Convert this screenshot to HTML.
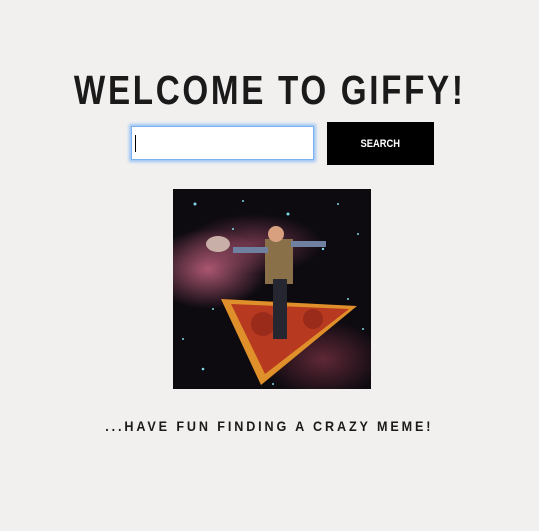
<!DOCTYPE html>
<html><head><style>
body{margin:0;width:539px;height:531px;background:#f2f0ef;font-family:"Liberation Sans",sans-serif;position:relative;overflow:hidden}
.t{position:absolute;left:0;width:539px;top:68px;text-align:center}
.t span{display:inline-block;font-weight:bold;font-size:41px;letter-spacing:3.3px;color:#1a1a1a;transform:scaleX(0.81);white-space:nowrap;line-height:44px}
.in{position:absolute;left:131px;top:126px;width:181px;height:32px;background:#fff;border:1px solid #7fb0f0;box-shadow:0 0 3px 2px #9cc4f5}
.in i{position:absolute;left:3px;top:8px;width:1px;height:17px;background:#000}
.btn{position:absolute;left:327px;top:122px;width:107px;height:43px;background:#000;color:#fff;font-weight:bold;font-size:11px;text-align:center;line-height:44px}
.btn span{display:inline-block;transform:scaleX(0.85)}
.img{position:absolute;left:173px;top:189px;width:198px;height:200px;overflow:hidden;background:
radial-gradient(ellipse 60px 40px at 35px 80px,rgba(200,100,130,.85),transparent),
radial-gradient(ellipse 70px 30px at 80px 55px,rgba(170,80,110,.6),transparent),
radial-gradient(ellipse 60px 40px at 150px 170px,rgba(150,60,80,.6),transparent),#0d0a10}
.bt{position:absolute;left:0;width:539px;top:418px;text-align:center}
.bt span{display:inline-block;font-weight:bold;font-size:14px;letter-spacing:3.2px;color:#1a1a1a;transform:scaleX(0.9);white-space:nowrap}
</style></head><body>
<div class="t"><span>WELCOME TO GIFFY!</span></div>
<div class="in"><i></i></div>
<div class="btn"><span>SEARCH</span></div>
<div class="img"><svg width="198" height="200">
<g fill="#7fd8e8"><circle cx="22" cy="15" r="1.5"/><circle cx="70" cy="12" r="1"/><circle cx="115" cy="25" r="1.5"/><circle cx="165" cy="15" r="1"/><circle cx="185" cy="45" r="1"/><circle cx="150" cy="60" r="1.2"/><circle cx="40" cy="120" r="1"/><circle cx="10" cy="150" r="1"/><circle cx="30" cy="180" r="1.3"/><circle cx="175" cy="110" r="1"/><circle cx="190" cy="140" r="1"/><circle cx="100" cy="195" r="1"/><circle cx="60" cy="40" r="1"/></g>
<polygon points="48,110 184,117 88,196" fill="#e0902a"/>
<polygon points="58,115 176,120 92,185" fill="#b73a20"/>
<circle cx="90" cy="135" r="12" fill="#9a2a1a"/><circle cx="140" cy="130" r="10" fill="#9a2a1a"/>
<rect x="92" y="50" width="28" height="45" fill="#8a7048"/>
<rect x="100" y="90" width="14" height="60" fill="#262630"/>
<circle cx="103" cy="45" r="8" fill="#d9a080"/>
<ellipse cx="45" cy="55" rx="12" ry="8" fill="#c8b0a8"/>
<rect x="60" y="58" width="35" height="6" fill="#7080a0"/><rect x="118" y="52" width="35" height="6" fill="#7080a0"/>
</svg></div>
<div class="bt"><span>...HAVE FUN FINDING A CRAZY MEME!</span></div>
</body></html>
